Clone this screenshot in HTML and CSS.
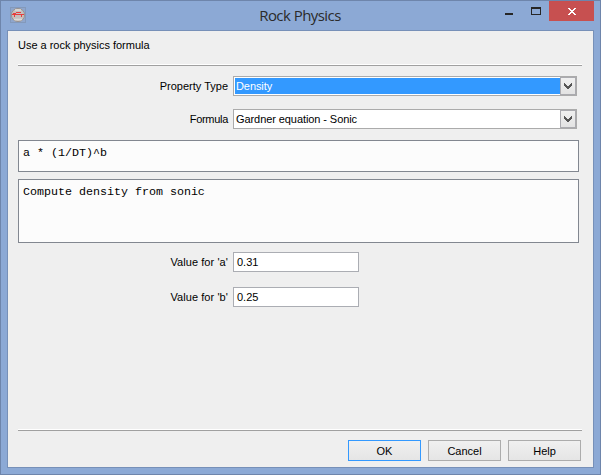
FILE: index.html
```html
<!DOCTYPE html>
<html lang="en">
<head>
<meta charset="utf-8">
<title>Rock Physics</title>
<link rel="stylesheet" href="styles.css">
</head>
<body>
<div class="window">
  <header class="titlebar">
    <svg class="app-icon" width="16" height="16" viewBox="0 0 16 16">
      <rect x=".5" y=".5" width="15" height="15" fill="#8fa6cc" stroke="#8399bb"/>
      <circle cx="8" cy="8" r="6.600" fill="#c4c0be" stroke="#9a9391"/>
      <path d="M5 3h6M4 12.500h8" stroke="#dedad6" stroke-width="1.5"/>
      <path d="M2 7.500h12M6 5.500h5M4.500 7v3M11.500 7v3M3 6.500h3" fill="none" stroke="#e83c3c" stroke-width="1"/>
    </svg>
    <h1 class="title">Rock Physics</h1>
    <div class="controls">
      <svg class="minimize" width="8" height="2"><rect width="8" height="2" fill="#262626"/></svg>
      <svg class="maximize" width="10" height="8"><path d="M0 0h10v8H0zM1 2v5h8V2z" fill="#262626" fill-rule="evenodd"/></svg>
      <div class="close"><svg width="8" height="7" viewBox="0 0 8 7"><path d="M0 0h2v1h1v1h2V1h1V0h2v1H7v1H6v1H5v1h1v1h1v1h1v1H6V6H5V5H3v1H2v1H0V6h1V5h1V4h1V3H2V2H1V1H0z" fill="#fff"/></svg></div>
    </div>
  </header>
  <main class="client">
    <p class="heading"><span class="heading-text">Use a rock physics formula</span></p>
    <div class="separator"></div>
    <div class="row type-row">
      <label class="label label-type">Property Type</label>
      <div class="combo selected"><span class="value">Density</span><span class="arrow"><svg width="8" height="6" viewBox="0 0 8 6"><path d="M0 0h1v1h1v1h1v1h2V2h1V1h1V0h1v3H7v1H6v1H5v1H3V5H2V4H1V3H0z" fill="#555"/></svg></span></div>
    </div>
    <div class="row formula-row">
      <label class="label label-formula">Formula</label>
      <div class="combo"><span class="value value-formula">Gardner equation - Sonic</span><span class="arrow"><svg width="8" height="6" viewBox="0 0 8 6"><path d="M0 0h1v1h1v1h1v1h2V2h1V1h1V0h1v3H7v1H6v1H5v1H3V5H2V4H1V3H0z" fill="#555"/></svg></span></div>
    </div>
    <div class="area expression">a * (1/DT)^b</div>
    <div class="area description">Compute density from sonic</div>
    <div class="row value-row">
      <label class="label label-value">Value for 'a'</label>
      <div class="field">0.31</div>
    </div>
    <div class="row value-row">
      <label class="label label-value">Value for 'b'</label>
      <div class="field">0.25</div>
    </div>
    <footer class="footer">
      <div class="separator"></div>
      <div class="buttons">
        <button class="button primary">OK</button>
        <button class="button">Cancel</button>
        <button class="button">Help</button>
      </div>
    </footer>
  </main>
</div>
</body>
</html>
```
FILE: styles.css
```css
* { box-sizing: border-box; }
body {
  margin: 0;
  font: 11px/14px "Liberation Sans", Arial, sans-serif;
  color: #000;
}
.window {
  width: 601px;
  height: 475px;
  border: 1px solid #6e85ab;
  background: #8ca9d5;
  padding: 0 6px 6px;
  display: flex;
  flex-direction: column;
}
.titlebar {
  height: 29px;
  flex: none;
  display: grid;
  grid-template-columns: 90px 1fr 90px;
}
.app-icon { margin: 6px 0 0 3px; }
.title {
  margin: 3px 1px 0 0;
  font: 15px/22px "Open Sans", sans-serif;
  color: #2b2b2b;
  text-align: center;
  letter-spacing: -0.55px;
}
.controls {
  display: flex;
  justify-content: flex-end;
  align-items: flex-start;
}
.minimize { margin: 12px 18px 0 0; flex: none; }
.maximize { margin: 6px 8px 0 0; flex: none; }
.close {
  width: 45px;
  height: 20px;
  flex: none;
  background: #c75050;
  display: flex;
  padding: 7px 0 0 19px;
}
.client {
  flex: 1;
  border: 1px solid #7790b8;
  background: #efefef;
  padding: 0 10px;
  display: flex;
  flex-direction: column;
}
.heading { margin: 7px 0 0; height: 26px; }
.heading-text { letter-spacing: -0.02px; }
.separator {
  height: 2px;
  flex: none;
  background: #a0a0a0;
  border-top: 1px solid #fff;
  margin-right: 1px;
}
.row {
  display: grid;
  grid-template-columns: 210px auto;
  column-gap: 5px;
  height: 20px;
  flex: none;
  align-items: center;
}
.label { text-align: right; }
.label-formula { letter-spacing: -0.3px; }
.label-value { letter-spacing: 0.08px; }
.type-row { margin-top: 10px; }
.formula-row { margin-top: 13px; }
.combo {
  width: 344px;
  height: 20px;
  border: 1px solid #ababab;
  background: #fff;
  display: flex;
}
.value { flex: 1; margin: 1px 0 1px 1px; padding: 1px; line-height: 14px; letter-spacing: -0.08px; }
.selected .value { background: #3399ff; color: #fff; }
.arrow {
  width: 16px;
  border: 1px solid #ababb0;
  background: linear-gradient(#f0f0f0, #e3e3e3);
  display: flex;
  align-items: center;
  justify-content: center;
}
.area {
  width: 561px;
  flex: none;
  border: 1px solid #828790;
  background: #fcfcfc;
  padding: 5px 4px;
  font: 11.67px/14px "Liberation Mono", monospace;
}
.expression { height: 32px; margin-top: 11px; }
.description { height: 64px; margin-top: 7px; }
.value-row { margin-top: 9px; }
.value-row + .value-row { margin-top: 15px; }
.field {
  width: 126px;
  height: 20px;
  border: 1px solid #abadb3;
  background: #fff;
  padding: 2px 3px;
}
.footer { margin-top: auto; }
.buttons {
  display: flex;
  justify-content: flex-end;
  gap: 7px;
  padding: 9px 2px 6px 0;
}
.button {
  width: 73px;
  height: 21px;
  border: 1px solid #acacac;
  background: linear-gradient(#f0f0f0, #e5e5e5);
  font: inherit;
  line-height: 14px;
  padding: 0;
  color: #000;
}
.primary { border-color: #3399ff; }
```
